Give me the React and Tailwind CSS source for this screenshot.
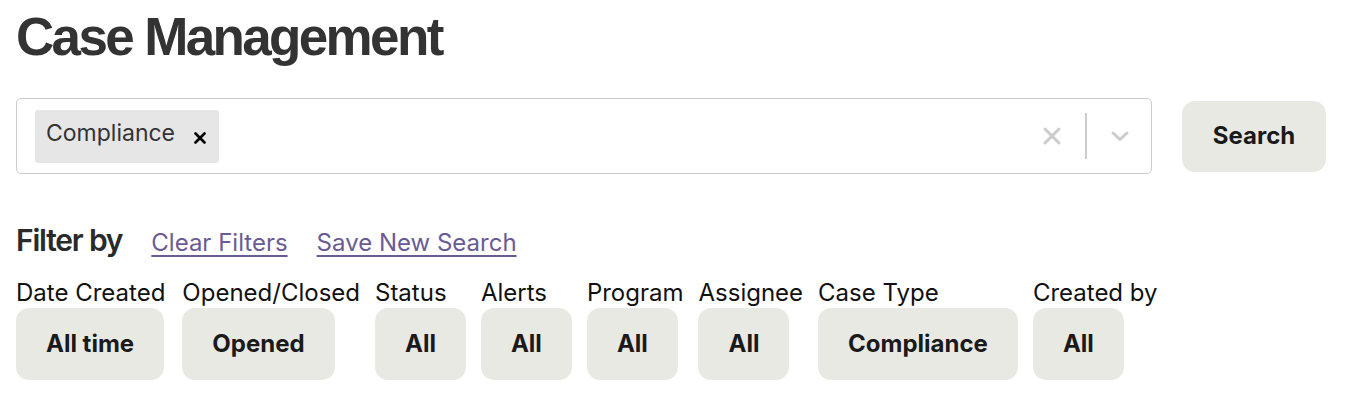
import React from "react";

const filters = [
  { label: "Date Created", value: "All time" },
  { label: "Opened/Closed", value: "Opened" },
  { label: "Status", value: "All" },
  { label: "Alerts", value: "All" },
  { label: "Program", value: "All" },
  { label: "Assignee", value: "All" },
  { label: "Case Type", value: "Compliance" },
  { label: "Created by", value: "All" },
];

export default function App() {
  return (
    <div className="w-[1348px] h-[418px] bg-white px-4 pt-[4px] font-['Inter',sans-serif] text-[#1a1a1a]">
      <h1 className="font-['Liberation_Sans',Arial,sans-serif] text-[53px] leading-[66px] font-bold tracking-[-0.05em] text-[#333333]">
        Case Management
      </h1>
      <div className="mt-[28px] flex items-center gap-[30px]">
        <div className="flex-1 h-[76px] border border-[#cccccc] rounded-[5px] flex items-center pl-[18px] pr-[21px]">
          <div className="h-[53px] bg-[#e6e6e6] rounded-[3px] flex items-center pl-[11px] pr-[13px]">
            <span className="text-[23px] text-[#333333] pb-[6px]">Compliance</span>
            <svg className="ml-[19px] mt-[4px]" width="12" height="12" viewBox="0 0 12 12">
              <path d="M1.5 1.5 L10.5 10.5 M10.5 1.5 L1.5 10.5" stroke="#000" strokeWidth="2.6" strokeLinecap="round" />
            </svg>
          </div>
          <div className="flex-1" />
          <svg width="20" height="20" viewBox="0 0 20 20" className="mr-[23px]">
            <path d="M3 3 L17 17 M17 3 L3 17" stroke="#cccccc" strokeWidth="3" strokeLinecap="round" />
          </svg>
          <div className="w-[2px] h-[46px] bg-[#cccccc]" />
          <svg width="20" height="20" viewBox="0 0 20 20" className="ml-[23px]">
            <path d="M3 7 L10 13.5 L17 7" stroke="#cccccc" strokeWidth="3" fill="none" strokeLinecap="round" strokeLinejoin="round" />
          </svg>
        </div>
        <button className="w-[144px] h-[71px] bg-[#e9e9e4] rounded-[13px] text-[24px] font-bold text-[#1a1a1a] mr-[6px]">
          Search
        </button>
      </div>
      <div className="mt-[44px] flex items-baseline">
        <span className="text-[30px] font-semibold tracking-[-0.04em] text-[#2a2a2a]">Filter by</span>
        <a href="#" className="ml-[29px] text-[24px] text-[#6b5b95] underline underline-offset-[4px]">Clear Filters</a>
        <a href="#" className="ml-[29px] text-[24px] text-[#6b5b95] underline underline-offset-[4px]">Save New Search</a>
      </div>
      <div className="mt-[15px] flex gap-[15px]">
        {filters.map((f, i) => (
          <div key={f.label} className={`flex flex-col items-start ${i === 0 ? "mr-[2px]" : ""}`}>
            <span className="text-[24px] leading-[30px] text-[#111111] whitespace-nowrap">{f.label}</span>
            <button className="h-[72px] px-[30px] bg-[#e9e9e4] rounded-[13px] text-[24px] font-bold text-[#1a1a1a] whitespace-nowrap">
              {f.value}
            </button>
          </div>
        ))}
      </div>
    </div>
  );
}
